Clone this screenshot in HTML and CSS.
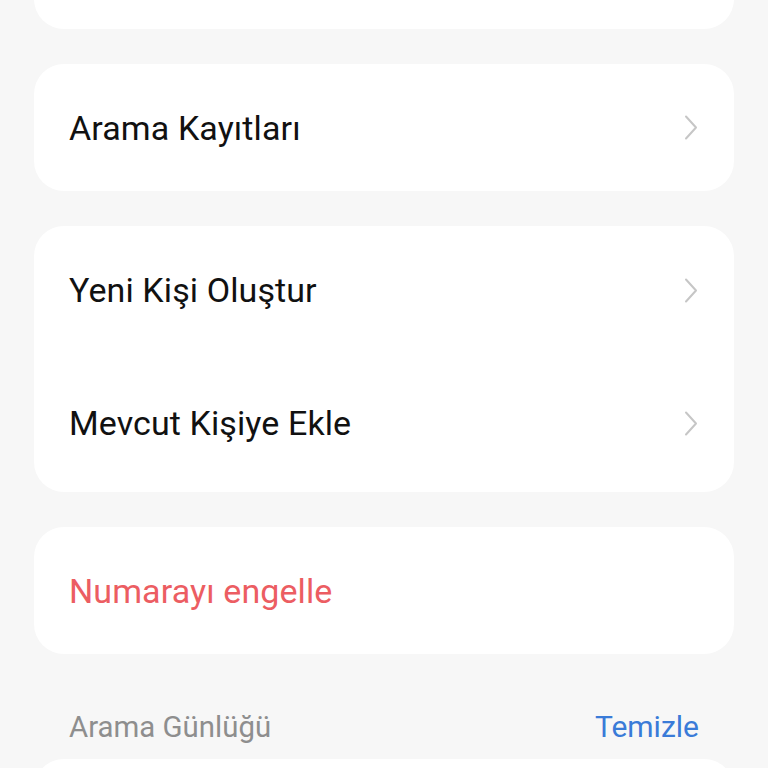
FILE: index.html
```html
<!DOCTYPE html>
<html lang="tr">
<head>
<meta charset="utf-8">
<link rel="stylesheet" href="styles.css">
</head>
<body>
<div class="page">
  <div class="card card-top"></div>

  <div class="card">
    <div class="row"><span class="label">Arama Kayıtları</span><svg class="chev" viewBox="0 0 14 26"><path d="M2 2 L12 13 L2 24" /></svg></div>
  </div>

  <div class="card">
    <div class="row row-a"><span class="label">Yeni Kişi Oluştur</span><svg class="chev" viewBox="0 0 14 26"><path d="M2 2 L12 13 L2 24" /></svg></div>
    <div class="row row-b"><span class="label">Mevcut Kişiye Ekle</span><svg class="chev" viewBox="0 0 14 26"><path d="M2 2 L12 13 L2 24" /></svg></div>
  </div>

  <div class="card">
    <div class="row"><span class="label danger">Numarayı engelle</span></div>
  </div>

  <div class="section-head">
    <span class="section-title">Arama Günlüğü</span>
    <span class="section-action">Temizle</span>
  </div>

  <div class="card card-bottom"></div>
</div>
</body>
</html>
```

FILE: styles.css
```css
html, body {
  margin: 0;
  padding: 0;
  background: #f7f7f7;
  height: 768px;
  overflow: hidden;
}

.page {
  padding: 0 34px;
  display: flex;
  flex-direction: column;
  gap: 35px;
  font-family: Roboto, "Noto Sans", sans-serif;
}

.card {
  background: #ffffff;
  border-radius: 30px;
}

.card-top {
  height: 127px;
  margin-top: -98px;
}

.row {
  height: 127px;
  display: flex;
  align-items: center;
  justify-content: space-between;
  padding: 0 36px 0 35px;
}

.row-a {
  height: 128px;
}

.row-b {
  height: 138px;
}

.label {
  font-size: 34px;
  color: #111111;
  letter-spacing: 0.1px;
}

.danger {
  color: #ec5d62;
}

.chev {
  width: 14px;
  height: 27px;
}

.chev path {
  fill: none;
  stroke: #c6c6c6;
  stroke-width: 2;
  stroke-linecap: round;
  stroke-linejoin: round;
}

.section-head {
  height: 70px;
  box-sizing: border-box;
  margin-bottom: -35px;
  display: flex;
  align-items: flex-end;
  justify-content: space-between;
  padding: 0 35px 15px 35px;
}

.section-title {
  font-size: 29.4px;
  color: #8e8e8e;
}

.section-action {
  font-size: 30px;
  color: #3a7bd8;
}

.card-bottom {
  height: 120px;
}
```
